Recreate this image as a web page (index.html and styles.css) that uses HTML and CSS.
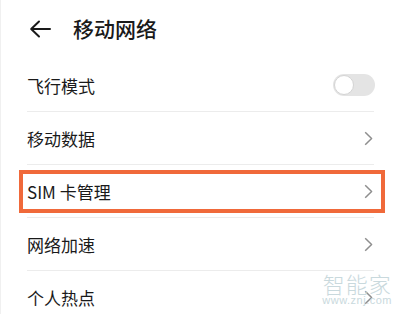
FILE: index.html
```html
<!DOCTYPE html>
<html lang="zh">
<head>
<meta charset="utf-8">
<link rel="stylesheet" href="styles.css">
</head>
<body>
<div class="page">
  <header class="header">
    <svg class="back" width="22" height="18" viewBox="0 0 22 18"><path d="M21 9H2.5M10 1.5L2.2 9L10 16.5" fill="none" stroke="#1a1a1a" stroke-width="2" stroke-linecap="round" stroke-linejoin="round"/></svg>
    <h1 class="title">移动网络</h1>
  </header>
  <ul class="list">
    <li class="row">
      <span class="label">飞行模式</span>
      <span class="toggle"><span class="knob"></span></span>
    </li>
    <li class="row">
      <span class="label">移动数据</span>
      <svg class="chev" width="9" height="15" viewBox="0 0 9 15"><path d="M1.2 1.2L7.6 7.5L1.2 13.8" fill="none" stroke="#8e8e8e" stroke-width="1.5" stroke-linejoin="round"/></svg>
    </li>
    <li class="row">
      <span class="label">SIM 卡管理</span>
      <svg class="chev" width="9" height="15" viewBox="0 0 9 15"><path d="M1.2 1.2L7.6 7.5L1.2 13.8" fill="none" stroke="#8e8e8e" stroke-width="1.5" stroke-linejoin="round"/></svg>
      <span class="highlight"></span>
    </li>
    <li class="row">
      <span class="label">网络加速</span>
      <svg class="chev" width="9" height="15" viewBox="0 0 9 15"><path d="M1.2 1.2L7.6 7.5L1.2 13.8" fill="none" stroke="#8e8e8e" stroke-width="1.5" stroke-linejoin="round"/></svg>
    </li>
    <li class="row">
      <span class="label">个人热点</span>
      <svg class="chev" width="9" height="15" viewBox="0 0 9 15"><path d="M1.2 1.2L7.6 7.5L1.2 13.8" fill="none" stroke="#8e8e8e" stroke-width="1.5" stroke-linejoin="round"/></svg>
    </li>
  </ul>
  <div class="watermark">
    <span class="wm-cn">智能家</span>
    <span class="wm-url">www.znj.com</span>
  </div>
</div>
</body>
</html>
```
FILE: styles.css
```css
* { box-sizing: border-box; }
html, body {
  margin: 0;
  padding: 0;
  background: #ffffff;
}
body {
  width: 400px;
  height: 314px;
  overflow: hidden;
  font-family: "Noto Sans CJK SC", "Noto Sans", sans-serif;
  color: #1a1a1a;
}
.page {
  position: relative;
  width: 400px;
  height: 314px;
  border-left: 1px solid #f0f0f0;
}
.header {
  height: 59px;
  display: flex;
  align-items: center;
  padding: 0 0 2px 28px;
}
.back {
  display: block;
  margin-top: 0;
}
.title {
  margin: 0 0 0 22px;
  font-size: 21px;
  font-weight: 500;
  line-height: 1;
  color: #1a1a1a;
}
.list {
  list-style: none;
  margin: 0 26px 0 26px;
  padding: 0;
}
.row {
  position: relative;
  height: 53px;
  display: flex;
  align-items: center;
  justify-content: space-between;
  border-top: 1px solid #ececec;
}
.row:first-child {
  border-top: none;
  height: 52px;
}
.label {
  font-size: 17px;
  line-height: 1;
  color: #1a1a1a;
}
.chev {
  display: block;
  margin-right: 1px;
}
.toggle {
  position: relative;
  width: 42px;
  height: 22px;
  border-radius: 11px;
  background: #e4e4e4;
  margin-right: -1px;
  margin-top: 0;
}
.knob {
  position: absolute;
  left: 1px;
  top: 1px;
  width: 20px;
  height: 20px;
  border-radius: 50%;
  background: #ffffff;
  border: 1px solid #d4d4d4;
}
.highlight {
  position: absolute;
  left: -8px;
  top: 5px;
  width: 366px;
  height: 43px;
  border: 4px solid #f0693a;
  pointer-events: none;
}
.watermark {
  position: absolute;
  right: 8px;
  top: 271px;
  display: flex;
  flex-direction: column;
  align-items: center;
  color: #c9d9dd;
}
.wm-cn {
  font-size: 22px;
  line-height: 24px;
  letter-spacing: 1px;
  font-weight: 300;
}
.wm-url {
  font-family: "Liberation Sans", Arial, sans-serif;
  font-size: 11px;
  line-height: 11px;
  letter-spacing: 0.5px;
}
```
